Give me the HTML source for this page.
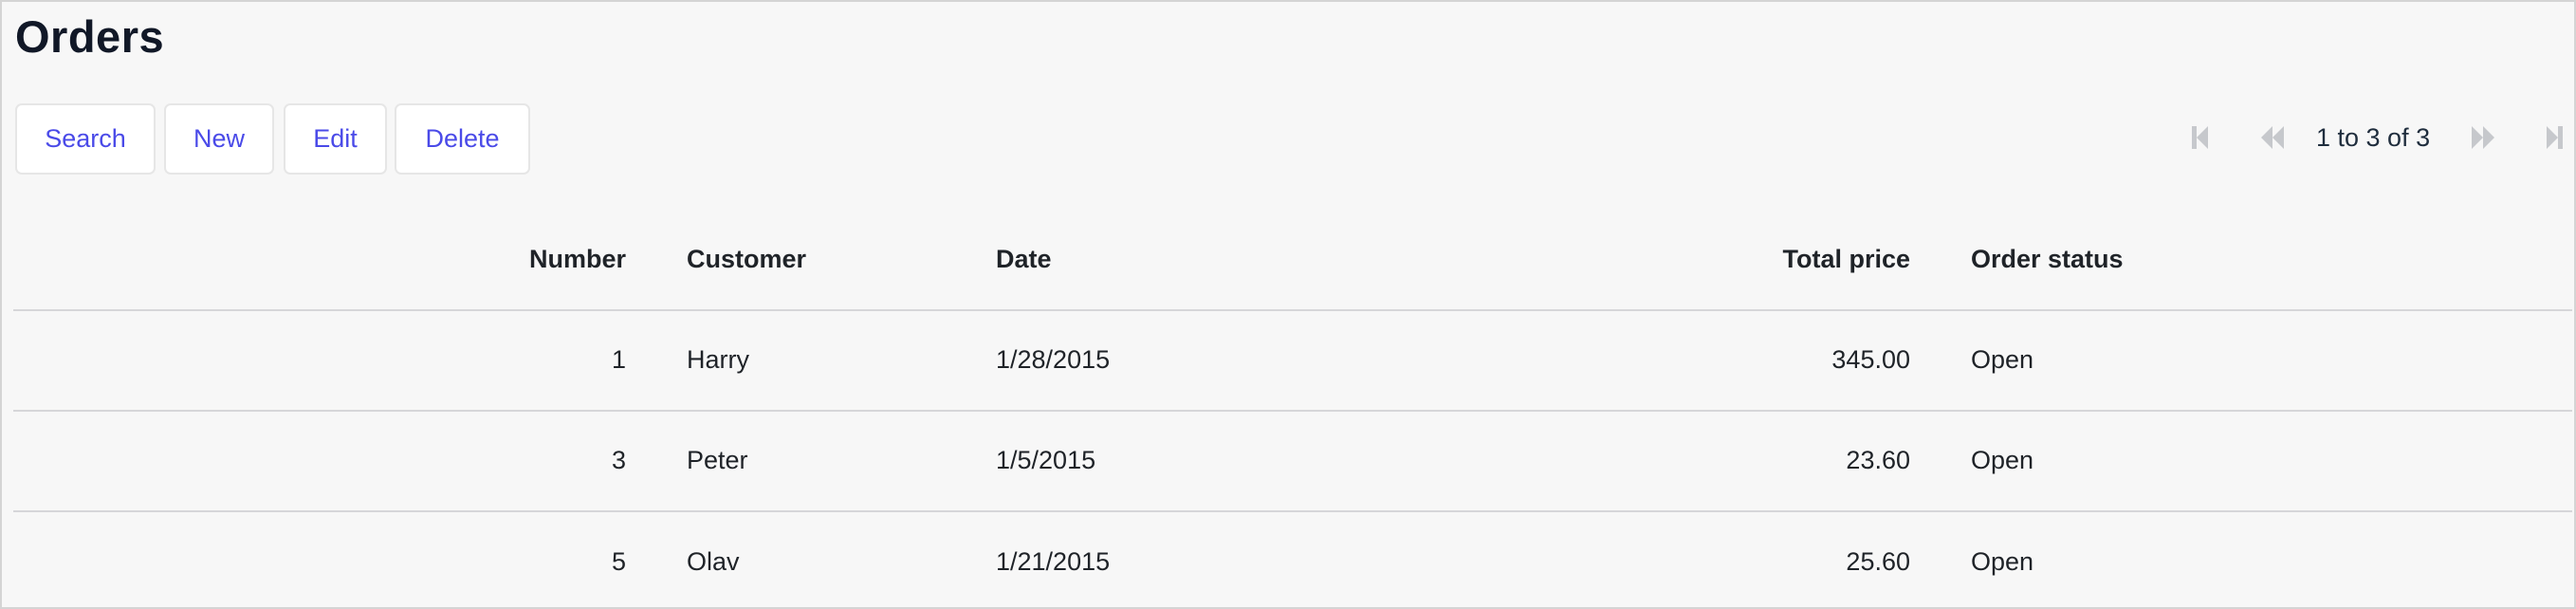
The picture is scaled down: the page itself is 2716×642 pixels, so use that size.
<!DOCTYPE html>
<html><head><meta charset="utf-8"><style>
html,body{margin:0;padding:0}
body{width:2716px;height:642px;background:#f7f7f7;font-family:"Liberation Sans",sans-serif;color:#1f2328;position:relative;overflow:hidden}
.frame{position:absolute;left:0;top:0;width:2712px;height:638px;border:2px solid #d4d4d4}
h1{position:absolute;left:16px;top:11px;margin:0;font-size:47px;font-weight:bold;color:#111827;letter-spacing:0.5px}
.btn{position:absolute;top:109px;background:#fff;border:2px solid #e6e6e6;border-radius:7px;color:#4a4ae8;font-size:27px;display:flex;align-items:center;justify-content:center;box-sizing:border-box;height:75px}
.t{position:absolute;font-size:27px;line-height:30px;white-space:nowrap}
.b{font-weight:bold}
.r{text-align:right}
.line{position:absolute;left:14px;width:2698px;height:2px;background:#d6d6d9}
.pg{position:absolute;top:131px}
</style></head><body>
<div class="frame"></div>
<h1>Orders</h1>
<div class="btn" style="left:16px;width:148px">Search</div>
<div class="btn" style="left:173px;width:116px">New</div>
<div class="btn" style="left:299px;width:109px">Edit</div>
<div class="btn" style="left:416px;width:143px">Delete</div>

<svg class="pg" style="left:2308px" width="24" height="28" viewBox="0 0 24 28"><rect x="3" y="2" width="5" height="24" fill="#c6c8cc"/><path d="M20 2 L8 14 L20 26Z" fill="#c6c8cc"/></svg>
<svg class="pg" style="left:2382px" width="28" height="28" viewBox="0 0 28 28"><path d="M14 2 L2 14 L14 26Z M26 2 L14 14 L26 26Z" fill="#c6c8cc"/></svg>
<div class="t" style="left:2442px;top:130px;color:#1f2d3d">1 to 3 of 3</div>
<svg class="pg" style="left:2604px" width="28" height="28" viewBox="0 0 28 28"><path d="M2 2 L14 14 L2 26Z M14 2 L26 14 L14 26Z" fill="#c6c8cc"/></svg>
<svg class="pg" style="left:2682px" width="24" height="28" viewBox="0 0 24 28"><path d="M3 2 L15 14 L3 26Z" fill="#c6c8cc"/><rect x="15" y="2" width="5" height="24" fill="#c6c8cc"/></svg>

<div class="t b r" style="left:460px;width:200px;top:258px">Number</div>
<div class="t b" style="left:724px;top:258px">Customer</div>
<div class="t b" style="left:1050px;top:258px">Date</div>
<div class="t b r" style="left:1714px;width:300px;top:258px">Total price</div>
<div class="t b" style="left:2078px;top:258px">Order status</div>
<div class="line" style="top:326px"></div>

<div class="t r" style="left:460px;width:200px;top:364px">1</div>
<div class="t" style="left:724px;top:364px">Harry</div>
<div class="t" style="left:1050px;top:364px">1/28/2015</div>
<div class="t r" style="left:1714px;width:300px;top:364px">345.00</div>
<div class="t" style="left:2078px;top:364px">Open</div>
<div class="line" style="top:432px"></div>

<div class="t r" style="left:460px;width:200px;top:470px">3</div>
<div class="t" style="left:724px;top:470px">Peter</div>
<div class="t" style="left:1050px;top:470px">1/5/2015</div>
<div class="t r" style="left:1714px;width:300px;top:470px">23.60</div>
<div class="t" style="left:2078px;top:470px">Open</div>
<div class="line" style="top:538px"></div>

<div class="t r" style="left:460px;width:200px;top:577px">5</div>
<div class="t" style="left:724px;top:577px">Olav</div>
<div class="t" style="left:1050px;top:577px">1/21/2015</div>
<div class="t r" style="left:1714px;width:300px;top:577px">25.60</div>
<div class="t" style="left:2078px;top:577px">Open</div>
</body></html>
